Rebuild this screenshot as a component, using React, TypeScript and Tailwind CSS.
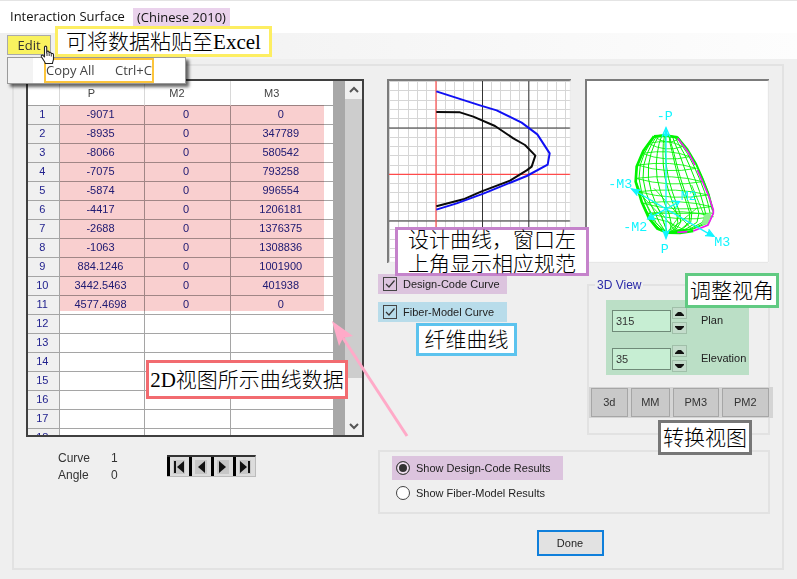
import { useState, type ReactNode } from "react";

const rows: [string, string, string][] = [
  ["-9071", "0", "0"],
  ["-8935", "0", "347789"],
  ["-8066", "0", "580542"],
  ["-7075", "0", "793258"],
  ["-5874", "0", "996554"],
  ["-4417", "0", "1206181"],
  ["-2688", "0", "1376375"],
  ["-1063", "0", "1308836"],
  ["884.1246", "0", "1001900"],
  ["3442.5463", "0", "401938"],
  ["4577.4698", "0", "0"],
];

function Note({ className, children }: { className: string; children: ReactNode }) {
  return (
    <div
      className={`absolute z-20 flex items-center justify-center whitespace-nowrap border-[3px] bg-white font-['Liberation_Serif','Noto_Sans_CJK_SC',serif] text-[21px] font-light leading-6 text-black ${className}`}
    >
      {children}
    </div>
  );
}

function HandCursor() {
  return (
    <svg className="absolute left-10 top-11 z-30 h-5 w-4" viewBox="0 0 16 20" aria-hidden="true">
      <path
        d="M4.5 12V2.2C4.5 .8 6.7.8 6.7 2.2V8l.2-1.2c.4-1 2-.8 2.1.3V8c.3-1 2.1-.9 2.2.3v.8c.4-.9 2.2-.8 2.3.6v4.6c0 1.200-1 2.200-1 4.200H5.300c0-1.500-2-3.300-3.900-6.700-.7-1.500 1-2.400 1.900-1.200z"
        fill="#fff"
        stroke="#222"
        strokeWidth="1.1"
        strokeLinejoin="round"
      />
      <path d="M7 8v3M9.200 8.500v2.500M11.300 9.500v2" stroke="#333" strokeWidth="1" />
    </svg>
  );
}

function MenuBar() {
  return (
    <nav className="flex h-[26px] items-start bg-linear-to-r from-[#efefef] to-[#fdfdfd] pl-[7px] pt-0.5">
      <button type="button" className="h-5 w-11 border border-[#aaaaaa] bg-[#f9f25f] font-['Open_Sans',sans-serif] text-[13px] leading-[18px] text-[#333]">
        Edit
      </button>
      <div className="absolute left-[7px] top-14 z-10 h-[27px] w-[179px] border border-[#9a9a9a] bg-white pl-[36px] shadow-[3px_3px_3px_rgba(0,0,0,0.6)]">
        <div className="absolute inset-y-0 left-0 w-[25px] bg-[#f3f3f3]" />
        <button
          type="button"
          className="relative flex h-[25px] w-[110px] items-center justify-between border-2 border-[#fcc53c] font-['Open_Sans',sans-serif] text-[13px] text-[#444]"
        >
          <span>Copy All</span>
          <span>Ctrl+C</span>
        </button>
      </div>
      <Note className="left-[55px] top-[25px] h-[31px] w-[217px] border-[#fdee62]">
        可将数据粘贴至<span className="font-normal">Excel</span>
      </Note>
      <HandCursor />
    </nav>
  );
}

function DataGrid() {
  return (
    <div className="relative flex h-[358px] border-2 border-[#3f3f3f] bg-[#a8a8a8]">
      <div className="relative h-full min-w-0 flex-1 overflow-hidden">
        <table className="w-full table-fixed border-collapse bg-white text-center text-[11px] text-[#22228e]">
          <colgroup>
            <col className="w-[31px]" />
            <col className="w-[85px]" />
            <col className="w-[86px]" />
            <col />
          </colgroup>
          <thead>
            <tr className="h-6 border-b border-[#a0a0a0] text-[#444]">
              <td className="border-r border-[#d8d8d8]" />
              <th scope="col" className="border-r border-[#d8d8d8] pr-5 font-normal">P</th>
              <th scope="col" className="border-r border-[#d8d8d8] pr-5 font-normal">M2</th>
              <th scope="col" className="pr-5 font-normal">M3</th>
            </tr>
          </thead>
          <tbody>
            {Array.from({ length: 18 }, (_, i) => (
              <tr key={i} className="h-[19px] border-b border-[#a5a5a5]">
                <th scope="row" className="border-r border-[#a5a5a5] bg-[#f0f0f0] pr-0.5 font-normal">{i + 1}</th>
                <td className="border-r border-[#a5a5a5] pr-0.5">{rows[i]?.[0]}</td>
                <td className="border-r border-[#a5a5a5] pr-0.5">{rows[i]?.[1]}</td>
                <td className="pr-0.5">{rows[i]?.[2]}</td>
              </tr>
            ))}
          </tbody>
        </table>
        <div className="pointer-events-none absolute left-8 right-[9px] top-6 h-[206px] bg-[#f9cfcf] mix-blend-multiply" />
      </div>
      <div className="ml-3 flex w-[17px] flex-col items-center bg-[#f0f0f0]">
        <svg className="h-[18px] w-4" viewBox="0 0 16 18" aria-hidden="true">
          <path d="M4 11l4-4 4 4" fill="none" stroke="#555" strokeWidth="2" />
        </svg>
        <div className="h-[279px] w-full bg-[#cdcdcd]" />
        <svg className="mt-auto h-[18px] w-4" viewBox="0 0 16 18" aria-hidden="true">
          <path d="M4 7l4 4 4-4" fill="none" stroke="#555" strokeWidth="2" />
        </svg>
      </div>
      <Note className="left-[118px] top-[279px] h-[39px] w-[202px] border-[#f26b70]">
        <span className="font-normal">2D</span>视图所示曲线数据
      </Note>
    </div>
  );
}

const navIcons = [
  { label: "First curve", d: "M4 3v12h2V3zM14 3v12L7 9z" },
  { label: "Previous curve", d: "M13 3v12L6 9z" },
  { label: "Next curve", d: "M5 3v12l7-6z" },
  { label: "Last curve", d: "M4 3v12l7-6zM12 3v12h2V3z" },
];

function CurveNav() {
  return (
    <div className="flex pl-8 pt-[13px]">
      <dl className="grid h-[34px] w-[67px] grid-cols-[1fr_auto] text-xs leading-[17px] text-[#333]">
        <dt>Curve</dt>
        <dd className="w-[14px]">1</dd>
        <dt>Angle</dt>
        <dd className="w-[14px]">0</dd>
      </dl>
      <div className="ml-[42px] mt-[5px] flex h-[22px] border-b border-r border-t-2 border-[#bbb] border-t-[#333] bg-[#e2e2e2]">
        {navIcons.map((n) => (
          <button key={n.label} type="button" aria-label={n.label} className="flex w-[22px] items-center border-l-[3px] border-black bg-[#dcdcdc]">
            <svg className="h-[18px] w-[18px]" viewBox="0 0 18 18" aria-hidden="true">
              <rect x="3" y="2" width="12" height="14" fill="#c6c6c6" />
              <path d={n.d} fill="#111" />
            </svg>
          </button>
        ))}
      </div>
    </div>
  );
}

const minor = Array.from({ length: 20 }, (_, i) => i);

function PlotView() {
  return (
    <svg className="block h-[184px] w-[184px] bg-white" viewBox="21 12 552 552" role="img" aria-label="Interaction curve">
      <g stroke="#d6d6d6" strokeWidth="3" shapeRendering="crispEdges">
        {minor.map((i) => (
          <path key={i} d={`M${29 + i * 27.8} 12V564M21 ${20 + i * 27.8}H573`} />
        ))}
      </g>
      <path d="M307.500 12V564M446.500 12V564M21 159H573M21 438H573" stroke="#333" strokeWidth="3" />
      <path d="M168 12V564M21 298H573" stroke="#ff4a4a" strokeWidth="3.500" />
      <g fill="none" strokeWidth="6" strokeLinejoin="round">
        <path d="M169 111L240 112 280 125 345 153 400 190 435 210 466 242 455 275 440 286 390 317 305 349 250 373 169 394" stroke="#0a0a0a" />
        <path d="M169 49L300 91 350 106 425 143 472 178 509 235 503 269 440 303 310 356 230 385 169 404" stroke="#1010f4" />
      </g>
      <path d="M24 564V15H573" fill="none" stroke="#7b7b7b" strokeWidth="6" />
      <path d="M571 16V562H25" fill="none" stroke="#e8e8e8" strokeWidth="3" />
    </svg>
  );
}

// Left and right silhouette of the surface, level by level.
const levels = [
  [184, 222, 293],
  [205, 205, 307],
  [235, 186, 329],
  [270, 172, 349],
  [310, 167, 368],
  [350, 174, 384],
  [385, 188, 394],
  [415, 204, 400],
  [442, 219, 388],
  [462, 240, 340],
  [473, 258, 272],
];
const meridians = [0, 0.05, 0.11, 0.19, 0.32, 0.44, 0.49, 0.64, 0.67, 0.78, 0.88, 0.95, 1];

function meridian(t: number) {
  return "M" + levels.map(([y, l, r]) => `${l + (r - l) * t} ${y}`).join("L");
}

function SurfaceView() {
  return (
    <svg className="block h-[184px] w-[184px] bg-white" viewBox="15 12 552 552" role="img" aria-label="Interaction surface">
      <g fill="none" stroke="#00f400" strokeWidth="3">
        {meridians.map((t) => (
          <path key={t} d={meridian(t)} />
        ))}
        {levels.slice(0, 8).map(([y, l, r]) => (
          <path key={y} d={`M${l} ${y}Q${(l + r) / 2} ${y + 28} ${r} ${y + 10}M${l} ${y}Q${(l + r) / 2 + 15} ${y - 14} ${r} ${y + 10}`} strokeWidth="2.500" />
        ))}
        <path d="M168 320L222 440 262 473M174 350L245 425 262 473M205 425L262 440 320 468M204 415L400 415M215 375L290 474M222 340L340 468M270 440L300 474M300 420L262 473 350 400M335 330L384 450" strokeWidth="2.500" />
        <path d="M222 184L258 182 293 187M222 184L190 228 170 275 167 320 185 380 207 430 232 461 262 473 300 474 340 468" strokeWidth="8" />
        <path d="M293 187L322 222 348 266 368 312 386 358 398 405" strokeWidth="6" />
        <path d="M372 420L396 412 384 448 365 450z" fill="#8df38d" stroke="none" />
      </g>
      <path d="M293 190L325 232 345 270M352 285L372 330 388 368 400 405 400 415 384 450 340 468M322 470l-30 2" fill="none" stroke="#f01af0" strokeWidth="5" />
      <g stroke="#10f5ff" strokeWidth="4" fill="none">
        <path d="M258 158V490M155 342L400 484M203 432L298 380" />
        <path d="M246 185L258 158 270 185M248 464L258 490 268 464M182 346L155 342 172 362M375 482L402 484 386 463M226 433L203 432 215 413M274 378L298 380 286 400" />
      </g>
      <path d="M258 162L250 184H266zM258 488L250 468H266zM155 342L180 344 170 360zM402 484L378 482 386 466zM203 432L226 434 216 416z" fill="#10f5ff" />
      <g fill="#10f5ff" fontSize="40" className="font-['Liberation_Mono',monospace]">
        <text x="230" y="136">-P</text>
        <text x="85" y="338">-M3</text>
        <text x="302" y="375">M2</text>
        <text x="130" y="467">-M2</text>
        <text x="403" y="513">M3</text>
        <text x="242" y="534">P</text>
      </g>
      <path d="M18 564V15H567" fill="none" stroke="#7b7b7b" strokeWidth="6" />
      <path d="M565 16V562H20" fill="none" stroke="#e3e3e3" strokeWidth="3" />
    </svg>
  );
}

function CheckRow({ label, className }: { label: string; className: string }) {
  const [on, setOn] = useState(true);
  return (
    <label className={`flex h-5 w-[129px] items-center gap-1.5 pl-[5px] text-[11px] text-[#222] ${className}`}>
      <span className="grid">
        <input
          type="checkbox"
          checked={on}
          onChange={() => setOn(!on)}
          className="col-start-1 row-start-1 size-[14px] appearance-none border border-[#444]"
        />
        {on && (
          <svg className="pointer-events-none col-start-1 row-start-1 size-[14px]" viewBox="0 0 14 14" aria-hidden="true">
            <path d="M3 7l3 3 5.500-6.500" fill="none" stroke="#333" strokeWidth="1.200" />
          </svg>
        )}
      </span>
      {label}
    </label>
  );
}

function Spinner({ label, initial }: { label: string; initial: number }) {
  const [value, setValue] = useState(initial);
  const arrow = "flex h-3 w-[15px] items-center justify-center border border-[#a0bfa9] bg-[#c3dccb]";
  return (
    <div className="flex items-center">
      <input
        id={label}
        type="text"
        value={value}
        onChange={(e) => setValue(Number(e.target.value) || 0)}
        className="h-[22px] w-[59px] border border-[#6f8a78] bg-[#c7eed3] pl-[3px] text-[11px] text-[#333]"
      />
      <div className="ml-px flex flex-col gap-[3px]">
        <button type="button" aria-label={`Increase ${label}`} onClick={() => setValue(value + 1)} className={arrow}>
          <svg className="h-[5px] w-[9px]" viewBox="0 0 9 5" aria-hidden="true"><path d="M0 5V4L3 1h3l3 3v1z" fill="#111" /></svg>
        </button>
        <button type="button" aria-label={`Decrease ${label}`} onClick={() => setValue(value - 1)} className={arrow}>
          <svg className="h-[5px] w-[9px]" viewBox="0 0 9 5" aria-hidden="true"><path d="M0 0v1l3 3h3l3-3V0z" fill="#111" /></svg>
        </button>
      </div>
      <label htmlFor={label} className="pl-[14px] text-[11px] text-[#222]">{label}</label>
    </div>
  );
}

function ViewPanel() {
  const button = "h-[29px] border border-[#a6a6a6] bg-[#c9c9c9] text-[11px] text-[#333]";
  return (
    <fieldset className="relative ml-0.5 mt-4 min-w-0 border-2 border-[#e2e2e2] pb-[15px]">
      <legend className="ml-1.5 px-0.5 text-xs leading-3 text-[#2a2aa8]">3D View</legend>
      <div className="ml-[17px] mt-[9px] flex h-[75px] w-[143px] flex-col gap-[11px] bg-[#bbdfc6] pl-1.5 pt-[7px]">
        <Spinner label="Plan" initial={315} />
        <Spinner label="Elevation" initial={35} />
      </div>
      <div className="-mr-[5px] mt-3 grid grid-cols-[37fr_40fr_46fr_48fr] gap-[3px] bg-[#d4d4d4] py-px pl-0.5 pr-1">
        <button type="button" className={button}>3d</button>
        <button type="button" className={button}>MM</button>
        <button type="button" className={button}>PM3</button>
        <button type="button" className={button}>PM2</button>
      </div>
      <Note className="-top-[18px] left-24 h-[35px] w-[94px] border-[#61ca82]">调整视角</Note>
      <Note className="left-[69px] top-[129px] h-[35px] w-[94px] border-[#777]">转换视图</Note>
    </fieldset>
  );
}

function ResultChoice() {
  const [choice, setChoice] = useState("Show Design-Code Results");
  return (
    <div role="radiogroup" aria-label="Results" className="mt-[15px] h-16 border-2 border-[#e2e2e2] pl-3 pt-1">
      {["Show Design-Code Results", "Show Fiber-Model Results"].map((name, i) => (
        <label
          key={name}
          className={`flex w-[171px] items-center gap-1.5 pl-1 text-[11px] text-[#222] ${i === 0 ? "h-6 bg-[#dcc4de]" : "h-[26px]"}`}
        >
          <input
            type="radio"
            name="results"
            checked={choice === name}
            onChange={() => setChoice(name)}
            className="size-[14px] appearance-none rounded-full border border-[#444] bg-white checked:bg-[#333] checked:shadow-[inset_0_0_0_2px_#f0e0f0]"
          />
          {name}
        </label>
      ))}
    </div>
  );
}

export default function App() {
  return (
    <div className="relative min-w-[797px] border-t border-[#e4e4e4] bg-[#efefef] pb-[9px] font-['Liberation_Sans',Arial,sans-serif]">
      <header className="flex h-8 items-center gap-2 bg-white pl-[10px] font-['Open_Sans',sans-serif] text-[13px] text-[#111]">
        <h1>Interaction Surface</h1>
        <span className="bg-[#ead2ec] px-1 leading-[18px]">(Chinese 2010)</span>
      </header>
      <MenuBar />
      <main className="ml-3 mr-[13px] mt-[5px] flex border-2 border-[#e2e2e2] pb-3 pl-3 pr-3 pt-[13px]">
        <section className="min-w-0 flex-1">
          <DataGrid />
          <CurveNav />
        </section>
        <section className="relative ml-[14px] w-[392px] shrink-0">
          <div className="grid grid-cols-[193px_185px] gap-x-[14px]">
            <div className="relative">
              <div className="ml-[9px]">
                <PlotView />
              </div>
              <Note className="left-[17px] top-[148px] h-[49px] w-[194px] border-[#c583cb]">
                <span>设计曲线，窗口左<br />上角显示相应规范</span>
              </Note>
              <div className="mt-[11px] flex flex-col gap-2">
                <CheckRow label="Design-Code Curve" className="bg-[#dcc4de]" />
                <CheckRow label="Fiber-Model Curve" className="bg-[#b8dcea]" />
              </div>
              <Note className="left-[38px] top-[244px] h-[33px] w-[101px] border-[#5cc3ee]">纤维曲线</Note>
            </div>
            <div>
              <SurfaceView />
              <ViewPanel />
            </div>
          </div>
          <ResultChoice />
          <div className="mt-4 flex justify-center pr-2">
            <button type="button" className="h-[26px] w-[67px] border-2 border-[#0f7fdb] bg-[#e2e2e2] text-[11px] text-[#222]">Done</button>
          </div>
          <svg className="pointer-events-none absolute -left-[47px] top-[241px] z-10 h-[120px] w-20" viewBox="0 0 80 120" aria-hidden="true">
            <path d="M76 116L12 18" stroke="#ffaac8" strokeWidth="3" />
            <path d="M1 1L22 16 12 18 8 26z" fill="#ffaac8" />
          </svg>
        </section>
      </main>
    </div>
  );
}
